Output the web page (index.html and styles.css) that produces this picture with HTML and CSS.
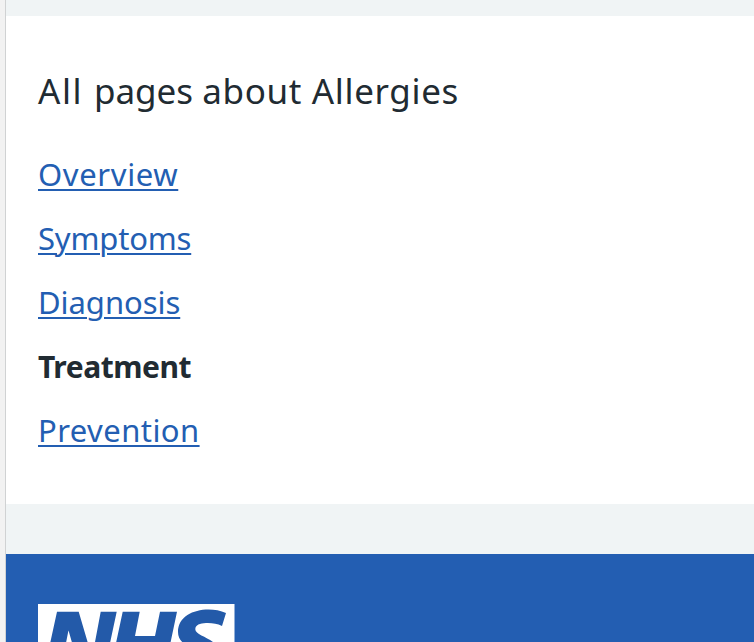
FILE: index.html
```
<!DOCTYPE html>
<html lang="en">
<head>
<meta charset="utf-8">
<title>Allergies</title>
<link rel="stylesheet" href="styles.css">
</head>
<body>
<div class="page">
<main class="content">
<h2 class="heading"><span class="lead">All </span><span class="tight">pages </span>about Allergies</h2>
<ul class="links">
<li><a class="overview" href="#">Overview</a></li>
<li><a class="symptoms" href="#">Symptoms</a></li>
<li><a class="diagnosis" href="#">Diagnosis</a></li>
<li><strong class="treatment">Treatment</strong></li>
<li><a class="prevention" href="#">Prevention</a></li>
</ul>
</main>
<footer class="footer">
<svg class="logo" width="197" height="80" viewBox="0 0 197 80" role="img" aria-label="NHS"><path fill="#fff" d="M0 0h196.5v80H0z"/><path fill="#235aa9" d="M19 7.7h21.7L54 53h.2L62.7 7.7h16L65 72H43.5L30.6 26.7h-.2L21.5 72H5zM84.7 7.7h17L97 32h20l5-24.300h17L125.500 72h-17l5.800-27.500h-20L88.500 72H71zM188 8.900L184 22C179 19.500 174 18.800 168 19C162 19.200 157.300 21 157.300 25.300C157.300 33 181.500 34 181.500 50C181.500 74 151 76 132 70L136 57C141 60 163 62 163 53C163 44 140 44 140 28C140 7 169 1 188 8.900z"/></svg>
</footer>
</div>
</body>
</html>
```
FILE: styles.css
```
body { margin: 0; background: #f2f2f2; font-family: "Noto Sans", sans-serif; color: #212b32; }
.page { margin-left: 5px; border-left: 1px solid #d0d2d3; background: #f0f4f5; height: 642px; overflow: hidden; box-sizing: border-box; padding-top: 16px; }
.content { background: #fff; height: 488px; box-sizing: border-box; padding: 49px 32px 0; }
.heading { margin: 0; font-size: 35px; font-weight: 400; line-height: 52px; letter-spacing: 0.65px; white-space: nowrap; }
.lead { letter-spacing: 1.6px; }
.tight { letter-spacing: 0; }
.links { list-style: none; margin: 25px 0 0; padding: 0; font-size: 31px; line-height: 64px; }
.links li { height: 64px; }
.links a { color: #235eb2; text-decoration-thickness: 2px; text-underline-offset: 3px; }
.overview { letter-spacing: 0.63px; }
.symptoms { letter-spacing: -0.18px; }
.diagnosis { letter-spacing: -0.05px; }
.treatment { font-size: 30px; font-weight: 700; letter-spacing: -0.45px; }
.prevention { letter-spacing: 0.43px; }
.footer { margin-top: 50px; background: #235eb2; height: 88px; box-sizing: border-box; padding: 50px 32px 0; }
.logo { display: block; }
```
